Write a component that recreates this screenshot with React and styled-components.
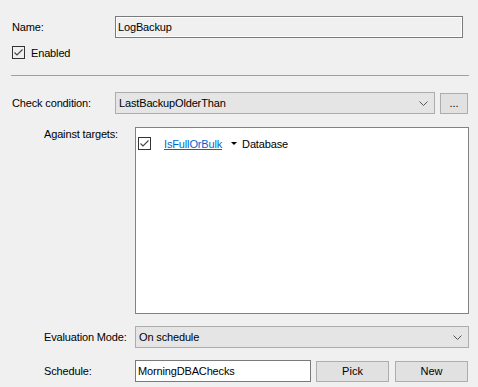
import React from "react";
import styled, { createGlobalStyle } from "styled-components";

const GlobalStyle = createGlobalStyle`
  html, body {
    margin: 0;
    padding: 0;
    background: #f0f0f0;
  }
  body {
    font-family: "Liberation Sans", Arial, sans-serif;
    font-size: 11px;
    color: #000;
  }
`;

const Form = styled.div`
  width: 478px;
  height: 387px;
  padding-top: 16px;
  box-sizing: border-box;
  display: flex;
  flex-direction: column;
  overflow: hidden;
`;

const Row = styled.div`
  display: flex;
  align-items: ${(p) => p.$align || "center"};
  padding-left: ${(p) => p.$indent || 12}px;
  margin-top: ${(p) => p.$top || 0}px;
`;

const Label = styled.div`
  width: ${(p) => p.$width}px;
  flex: none;
  line-height: 14px;
  letter-spacing: -0.15px;
`;

const TextBox = styled.div`
  width: ${(p) => p.$width}px;
  height: 22px;
  box-sizing: border-box;
  border: 1px solid #7a7a7a;
  background: ${(p) => (p.$readOnly ? "#f0f0f0" : "#fff")};
  box-shadow: ${(p) => (p.$readOnly ? "inset 0 0 0 1px #fff" : "none")};
  padding-left: 2px;
  display: flex;
  align-items: center;
  letter-spacing: -0.15px;
`;

const CheckBox = styled.span`
  width: 13px;
  height: 13px;
  box-sizing: border-box;
  border: 1px solid #333;
  background: ${(p) => (p.$white ? "#fff" : "#f0f0f0")};
  display: inline-flex;
  align-items: center;
  justify-content: center;
  flex: none;
`;

const CheckLabel = styled.span`
  margin-left: 6px;
  letter-spacing: -0.15px;
`;

const Separator = styled.div`
  margin: 16px 0 0 11px;
  width: 458px;
  height: 1px;
  background: #a0a0a0;
`;

const Combo = styled.div`
  width: ${(p) => p.$width}px;
  height: 22px;
  box-sizing: border-box;
  border: 1px solid #adadad;
  background: #e5e5e5;
  display: flex;
  align-items: center;
  justify-content: space-between;
  padding: 0 6px 0 3px;
  letter-spacing: -0.15px;
`;

const Button = styled.div`
  width: ${(p) => p.$width}px;
  height: 21px;
  box-sizing: border-box;
  margin-left: ${(p) => p.$left || 0}px;
  border: 1px solid #adadad;
  background: #e1e1e1;
  display: flex;
  align-items: center;
  justify-content: center;
  flex: none;
`;

const ListBox = styled.div`
  width: 334px;
  height: 187px;
  box-sizing: border-box;
  border: 1px solid #828282;
  background: #fff;
  padding: 9px 0 0 2px;
`;

const TargetItem = styled.div`
  display: flex;
  align-items: center;
`;

const Link = styled.span`
  margin-left: 13px;
  color: #0066cc;
  text-decoration: underline;
  letter-spacing: -0.15px;
`;

const DropArrow = styled.span`
  margin-left: 9px;
  width: 0;
  height: 0;
  border-left: 3px solid transparent;
  border-right: 3px solid transparent;
  border-top: 3px solid #000;
`;

const TargetType = styled.span`
  margin-left: 5px;
  letter-spacing: -0.15px;
`;

const Check = () => (
  <svg width="11" height="11" viewBox="0 0 11 11">
    <path d="M1.5 5.5 L4 8 L9.5 2.5" fill="none" stroke="#444" strokeWidth="1.1" />
  </svg>
);

const Chevron = () => (
  <svg width="9" height="5" viewBox="0 0 9 5">
    <path d="M0.5 0.5 L4.5 4.5 L8.5 0.5" fill="none" stroke="#555" strokeWidth="1" />
  </svg>
);

const App = () => {
  return (
    <>
      <GlobalStyle />
      <Form>
        <Row>
          <Label $width={103}>Name:</Label>
          <TextBox $width={348} $readOnly>LogBackup</TextBox>
        </Row>
        <Row $top={8}>
          <CheckBox><Check /></CheckBox>
          <CheckLabel>Enabled</CheckLabel>
        </Row>
        <Separator />
        <Row $top={16}>
          <Label $width={103}>Check condition:</Label>
          <Combo $width={320}>
            <span>LastBackupOlderThan</span>
            <Chevron />
          </Combo>
          <Button $width={28} $left={5}>...</Button>
        </Row>
        <Row $top={13} $indent={44} $align="flex-start">
          <Label $width={91}>Against targets:</Label>
          <ListBox>
            <TargetItem>
              <CheckBox $white><Check /></CheckBox>
              <Link>IsFullOrBulk</Link>
              <DropArrow />
              <TargetType>Database</TargetType>
            </TargetItem>
          </ListBox>
        </Row>
        <Row $top={12} $indent={44}>
          <Label $width={91}>Evaluation Mode:</Label>
          <Combo $width={334}>
            <span>On schedule</span>
            <Chevron />
          </Combo>
        </Row>
        <Row $top={12} $indent={44}>
          <Label $width={91}>Schedule:</Label>
          <TextBox $width={176}>MorningDBAChecks</TextBox>
          <Button $width={73} $left={5}>Pick</Button>
          <Button $width={73} $left={6}>New</Button>
        </Row>
      </Form>
    </>
  );
};

export default App;
